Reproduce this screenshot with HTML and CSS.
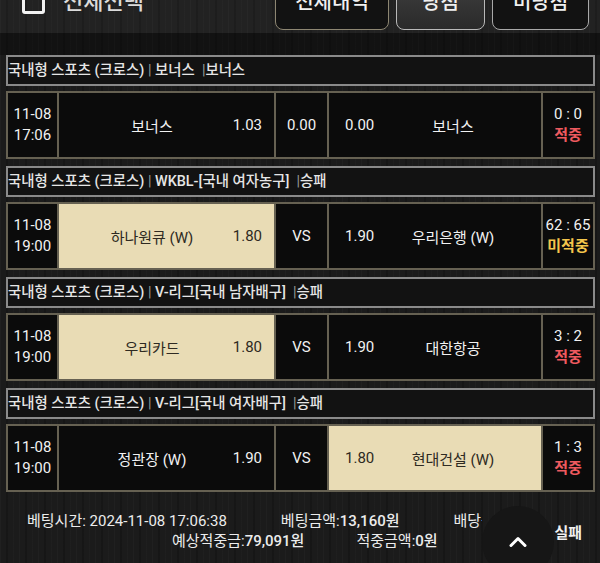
FILE: index.html
```html
<!DOCTYPE html>
<html lang="ko">
<head>
<meta charset="utf-8">
<title>베팅내역</title>
<link rel="stylesheet" href="styles.css">
</head>
<body>
<div class="page">
  <div class="top">
    <div class="checkbox"></div>
    <div class="check-label">전체선택</div>
    <div class="tabs">
      <div class="tab tab-all">전체내역</div>
      <div class="tab tab-win">당첨</div>
      <div class="tab tab-lose">미당첨</div>
    </div>
  </div>
  <div class="strip"></div>

  <div class="list">
    <div class="section">
      <div class="head">국내형 스포츠 (크로스) <span class="sep">|</span> 보너스 &nbsp;<span class="sep">|</span>보너스</div>
      <div class="row">
        <div class="cell date"><span>11-08</span><span>17:06</span></div>
        <div class="cell home"><span class="name">보너스</span><span class="odds">1.03</span></div>
        <div class="cell mid">0.00</div>
        <div class="cell away"><span class="odds">0.00</span><span class="name">보너스</span></div>
        <div class="cell score"><span>0 : 0</span><span class="hit">적중</span></div>
      </div>
    </div>

    <div class="section">
      <div class="head">국내형 스포츠 (크로스) <span class="sep">|</span> WKBL-[국내 여자농구] &nbsp;<span class="sep">|</span>승패</div>
      <div class="row">
        <div class="cell date"><span>11-08</span><span>19:00</span></div>
        <div class="cell home picked"><span class="name">하나원큐 (W)</span><span class="odds">1.80</span></div>
        <div class="cell mid">VS</div>
        <div class="cell away"><span class="odds">1.90</span><span class="name">우리은행 (W)</span></div>
        <div class="cell score"><span>62 : 65</span><span class="miss">미적중</span></div>
      </div>
    </div>

    <div class="section">
      <div class="head">국내형 스포츠 (크로스) <span class="sep">|</span> V-리그[국내 남자배구] &nbsp;<span class="sep">|</span>승패</div>
      <div class="row">
        <div class="cell date"><span>11-08</span><span>19:00</span></div>
        <div class="cell home picked"><span class="name">우리카드</span><span class="odds">1.80</span></div>
        <div class="cell mid">VS</div>
        <div class="cell away"><span class="odds">1.90</span><span class="name">대한항공</span></div>
        <div class="cell score"><span>3 : 2</span><span class="hit">적중</span></div>
      </div>
    </div>

    <div class="section">
      <div class="head">국내형 스포츠 (크로스) <span class="sep">|</span> V-리그[국내 여자배구] &nbsp;<span class="sep">|</span>승패</div>
      <div class="row">
        <div class="cell date"><span>11-08</span><span>19:00</span></div>
        <div class="cell home"><span class="name">정관장 (W)</span><span class="odds">1.90</span></div>
        <div class="cell mid">VS</div>
        <div class="cell away picked"><span class="odds">1.80</span><span class="name">현대건설 (W)</span></div>
        <div class="cell score"><span>1 : 3</span><span class="hit">적중</span></div>
      </div>
    </div>
  </div>

  <div class="footer">
    <div class="info">
      <div class="line line1">
        <span>베팅시간: 2024-11-08 17:06:38</span>
        <span>베팅금액:<b>13,160원</b></span>
        <span>배당률:<b>1.03</b></span>
      </div>
      <div class="line line2">
        <span>예상적중금:<b>79,091원</b></span>
        <span>적중금액:<b>0원</b></span>
      </div>
    </div>
    <div class="result">실패</div>
    <div class="to-top">
      <svg width="18" height="11" viewBox="0 0 18 11"><polyline points="2,9.5 9,2.5 16,9.5" fill="none" stroke="#ffffff" stroke-width="3" stroke-linecap="round" stroke-linejoin="round"/></svg>
    </div>
  </div>
</div>
</body>
</html>
```

FILE: styles.css
```css
html, body {
  margin: 0;
  padding: 0;
}
body {
  width: 600px;
  height: 563px;
  overflow: hidden;
  background-color: #1b1b1b;
  background-image: repeating-linear-gradient(90deg,
    rgba(255,255,255,0.025) 0 1px,
    transparent 1px 6px,
    rgba(0,0,0,0.18) 6px 8px,
    transparent 8px 13px,
    rgba(255,255,255,0.015) 13px 14px,
    transparent 14px 19px);
  font-family: Roboto, "Noto Sans CJK KR", sans-serif;
  color: #f0f0f0;
}
.page {
  width: 600px;
  height: 563px;
  position: relative;
  overflow: hidden;
}

/* top bar */
.top {
  height: 30px;
  display: flex;
  align-items: flex-end;
  padding: 0 11px 3px 22px;
  background: rgba(255,255,255,0.03);
}
.checkbox {
  width: 17px;
  height: 22px;
  border: 3px solid #f2f2f2;
  border-radius: 3px;
  margin-bottom: 16px;
  flex: none;
}
.check-label {
  font-size: 22px;
  line-height: 24px;
  font-weight: 500;
  color: #dcdcdc;
  margin: 0 0 16px 18px;
}
.tabs {
  margin-left: auto;
  display: flex;
  gap: 7px;
  align-items: flex-end;
}
.tab {
  height: 39px;
  box-sizing: border-box;
  border-radius: 8px;
  display: flex;
  justify-content: center;
  align-items: flex-start;
  font-size: 20px;
  line-height: 20px;
  font-weight: 500;
  color: #f0f0f0;
  background: #121212;
}
.tab-all {
  width: 114px;
  border: 1.5px solid #8d8672;
}
.tab-win {
  width: 89px;
  border: 1.5px solid #b9b9b9;
  background: linear-gradient(#3a3a3a, #2a2a2a);
}
.tab-lose {
  width: 97px;
  border: 1.5px solid #a8a8a8;
}
.strip {
  height: 22px;
  background: rgba(0,0,0,0.3);
}

/* list */
.list {
  padding: 0 5px 0 6px;
}
.section {
  margin-bottom: 7px;
}
.head {
  height: 27px;
  border: 2px solid #8a8a8a;
  background: #121212;
  font-size: 14.4px;
  font-weight: 500;
  line-height: 27px;
  padding-left: 0;
  color: #e6e6e6;
  white-space: nowrap;
}
.sep {
  color: #9a9a9a;
  font-weight: 400;
}
.row {
  margin-top: 5px;
  height: 64px;
  padding: 2px;
  display: grid;
  grid-template-columns: 49px 215px 51px 212px 50px;
  column-gap: 2px;
  background: #666152;
}
.cell {
  background: #0b0b0b;
  display: flex;
  align-items: center;
  font-size: 15px;
  color: #f2f2f2;
  white-space: nowrap;
}
.cell.picked {
  background: #e9dcb5;
  color: #2e2a22;
}
.date, .score {
  flex-direction: column;
  justify-content: center;
  line-height: 21px;
}
.mid {
  justify-content: center;
}
.home {
  padding: 0 12px 0 18px;
}
.home .name {
  width: 150px;
  text-align: center;
}
.home .odds {
  margin-left: auto;
}
.away {
  padding: 0 13px 0 16px;
}
.away .name {
  margin-left: auto;
  width: 150px;
  text-align: center;
}
.hit {
  color: #ee5a5f;
  font-weight: 700;
}
.miss {
  color: #f4c64c;
  font-weight: 700;
}

/* footer */
.footer {
  position: relative;
  display: flex;
  align-items: center;
  padding-top: 12px;
  font-size: 15px;
  color: #ececec;
}
.info {
  width: 482px;
  overflow: hidden;
}
.line {
  display: flex;
  white-space: nowrap;
  line-height: 20px;
}
.line b {
  font-weight: 500;
}
.line1 {
  padding-left: 27px;
  gap: 54px;
}
.line2 {
  padding-left: 172px;
  gap: 52px;
}
.result {
  margin-left: auto;
  margin-right: 18px;
  font-weight: 700;
  color: #f0f0f0;
}
.to-top {
  position: absolute;
  left: 482px;
  top: 7px;
  width: 72px;
  height: 72px;
  border-radius: 50%;
  background: #161616;
  display: flex;
  justify-content: center;
  align-items: center;
}
.to-top svg {
  margin-top: -2px;
}
```
